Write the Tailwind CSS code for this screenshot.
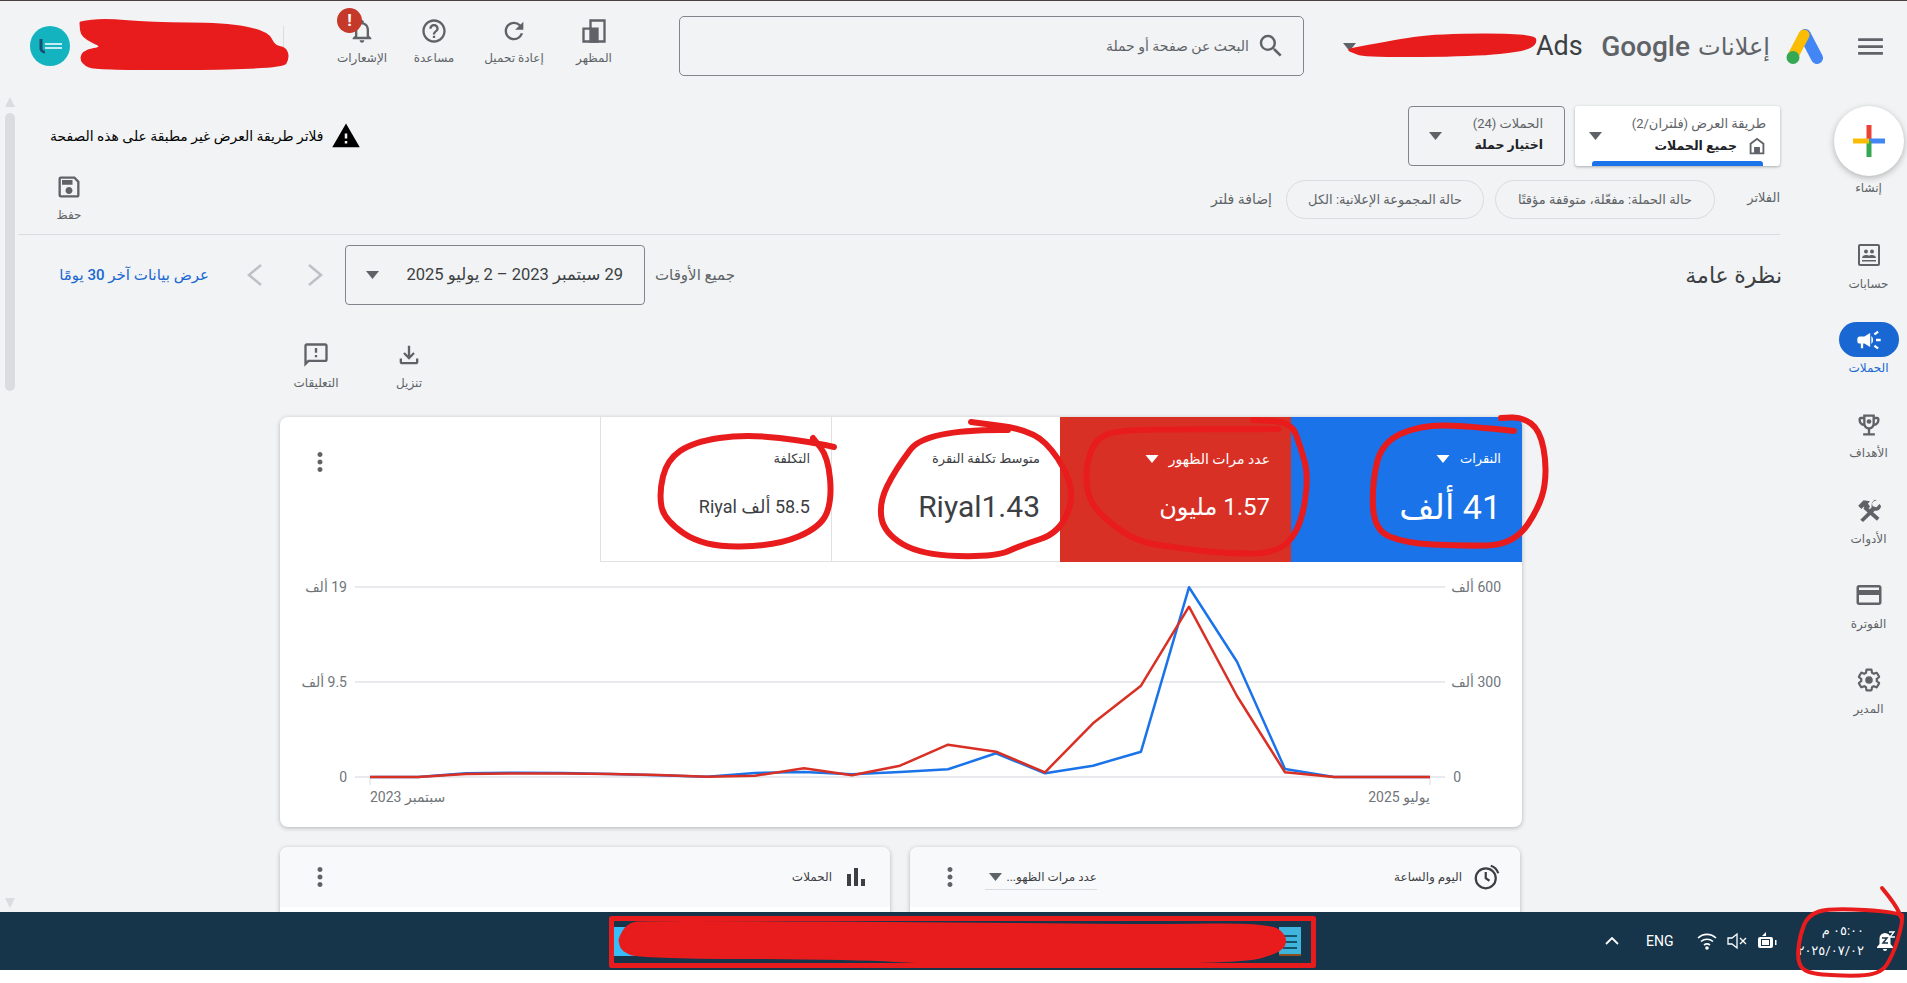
<!DOCTYPE html>
<html lang="ar" dir="rtl" class="font-[Roboto,'Liberation_Sans','DejaVu_Sans',sans-serif]">
<head>
<meta charset="UTF-8">
<title>Google Ads</title>
<script src="https://cdn.jsdelivr.net/npm/@tailwindcss/browser@4"></script>
</head>
<body class="relative w-[1907px] h-[983px] overflow-hidden bg-white text-[#5f6368]">

<div class="h-[983px] flex flex-col">
  <div class="h-px bg-[#4a4040]"></div>
  <div class="h-[911px] bg-[#f1f3f4] flex flex-col">

    <!-- header -->
    <header class="flex h-[91px] shrink-0">
      <svg class="w-[33px] h-[33px] mr-[20px] self-center" viewBox="0 0 24 24" fill="#5f6368"><path d="M3 18h18v-2H3v2zm0-5h18v-2H3v2zm0-7v2h18V6H3z"/></svg>
      <svg class="w-[37px] h-[36px] mr-[31px] self-center" viewBox="0 0 37 36">
        <path d="M19 6 L31 29" stroke="#4285f4" stroke-width="12" stroke-linecap="round" fill="none"/>
        <path d="M18 6 L7 27" stroke="#fbbc04" stroke-width="11" stroke-linecap="round" fill="none"/>
        <circle cx="7" cy="28.500" r="6.500" fill="#34a853"/>
      </svg>
      <span class="w-[70px] mr-[16px] self-center text-[24px] whitespace-nowrap">إعلانات</span>
      <span dir="ltr" class="w-[92px] mr-[10px] self-center text-[28px] font-medium text-right whitespace-nowrap">Google</span>
      <span dir="ltr" class="w-[47px] mr-[15px] self-center text-[27px] text-[#3c4043] whitespace-nowrap">Ads</span>
      <svg class="w-[13px] h-[8px] mr-[180px] self-center" viewBox="0 0 13 8" fill="#5f6368"><path d="M0 0h13L6.500 8z"/></svg>
      <div class="w-[625px] h-[60px] mr-[39px] mt-[15px] border border-[#80868b] rounded-[5px] flex items-center">
        <svg class="w-[30px] h-[30px] mr-[17px]" viewBox="0 0 24 24" fill="#5f6368"><path d="M15.500 14h-.79l-.28-.27A6.471 6.471 0 0 0 16 9.500 6.500 6.500 0 1 0 9.500 16c1.610 0 3.090-.59 4.230-1.570l.27.28v.79l5 4.990L20.490 19l-4.990-5zm-6 0C7.010 14 5 11.990 5 9.500S7.010 5 9.500 5 14 7.010 14 9.500 11.990 14 9.500 14z"/></svg>
        <span class="mr-[7px] text-[14px] whitespace-nowrap">البحث عن صفحة أو حملة</span>
      </div>

      <button class="w-[80px] mr-[45px] mt-[16px] flex flex-col items-center self-start">
        <svg class="w-[28px] h-[28px]" viewBox="0 0 24 24" fill="none" stroke="#5f6368" stroke-width="2"><path d="M3 21V10h6V3h12v18z"/><path d="M9 10h6v11H9z" fill="#5f6368"/></svg>
        <span class="mt-[5px] text-[12px] leading-4 whitespace-nowrap">المظهر</span>
      </button>
      <button class="w-[80px] mt-[16px] flex flex-col items-center self-start">
        <svg class="w-[28px] h-[28px]" viewBox="0 0 24 24" fill="#5f6368"><path d="M17.650 6.350A7.958 7.958 0 0 0 12 4c-4.420 0-7.990 3.580-7.990 8s3.570 8 7.990 8c3.730 0 6.840-2.550 7.730-6h-2.080A5.990 5.990 0 0 1 12 18c-3.310 0-6-2.690-6-6s2.690-6 6-6c1.660 0 3.140.69 4.220 1.780L13 11h7V4l-2.350 2.350z"/></svg>
        <span class="mt-[5px] text-[12px] leading-4 whitespace-nowrap">إعادة تحميل</span>
      </button>
      <button class="w-[80px] mt-[16px] flex flex-col items-center self-start">
        <svg class="w-[28px] h-[28px]" viewBox="0 0 24 24" fill="#5f6368"><path d="M11 18h2v-2h-2v2zm1-16C6.480 2 2 6.480 2 12s4.480 10 10 10 10-4.480 10-10S17.520 2 12 2zm0 18c-4.410 0-8-3.590-8-8s3.590-8 8-8 8 3.590 8 8-3.590 8-8 8zm0-14c-2.210 0-4 1.790-4 4h2c0-1.100.9-2 2-2s2 .9 2 2c0 2-3 1.750-3 5h2c0-2.250 3-2.500 3-5 0-2.210-1.790-4-4-4z"/></svg>
        <span class="mt-[5px] text-[12px] leading-4 whitespace-nowrap">مساعدة</span>
      </button>
      <button class="relative w-[64px] mt-[16px] flex flex-col items-center self-start">
        <svg class="w-[28px] h-[28px]" viewBox="0 0 24 24" fill="#5f6368"><path d="M12 22c1.100 0 2-.9 2-2h-4c0 1.100.9 2 2 2zm6-6v-5c0-3.070-1.630-5.640-4.500-6.320V4c0-.83-.67-1.500-1.500-1.500s-1.500.67-1.500 1.500v.68C7.640 5.360 6 7.920 6 11v5l-2 2v1h16v-1l-2-2zm-2 1H8v-6c0-2.480 1.510-4.500 4-4.500s4 2.020 4 4.500v6z"/></svg>
        <span class="mt-[5px] text-[12px] leading-4 whitespace-nowrap">الإشعارات</span>
        <span class="absolute right-[32px] top-[-9px] w-[25px] h-[25px] rounded-full bg-[#c5392b] text-white font-bold text-[17px] leading-[25px] text-center">!</span>
      </button>
      <div class="w-px h-[22px] mt-[25px] mr-[46px] bg-[#dadce0]"></div>
      <div class="w-[40px] h-[40px] mr-auto ml-[30px] mt-[25px] rounded-full bg-[#14b3c0] flex items-center justify-center">
        <svg class="w-[28px] h-[16px]" viewBox="0 0 28 16"><path d="M5 1v10a4 4 0 0 0 4 3" stroke="#1b4f72" stroke-width="3" fill="none"/><path d="M9 6h17M9 10h17" stroke="#fff" stroke-width="1.500"/></svg>
      </div>
    </header>

    <div class="flex h-[820px] overflow-hidden">
      <!-- side nav -->
      <nav class="w-[127px] shrink-0 flex flex-col items-start text-[12px] leading-4">
        <div class="w-[77px] mt-[14px] flex flex-col items-center">
          <div class="w-[70px] h-[70px] rounded-full bg-white shadow-[0_2px_6px_rgba(60,64,67,0.35)] flex items-center justify-center">
            <svg class="w-[32px] h-[32px]" viewBox="0 0 32 32">
              <path d="M13.500 0h5v16h-5z" fill="#ea4335"/>
              <path d="M16 13.500h16v5H16z" fill="#4285f4"/>
              <path d="M13.500 16h5v16h-5z" fill="#34a853"/>
              <path d="M0 13.500h16v5H0z" fill="#fbbc04"/>
            </svg>
          </div>
          <span class="mt-[4px] whitespace-nowrap">إنشاء</span>
        </div>
        <div class="w-[77px] mt-[47px] flex flex-col items-center">
          <svg class="w-[24px] h-[24px]" viewBox="0 0 24 24" fill="#5f6368"><path fill-rule="evenodd" d="M3 1h18a2 2 0 0 1 2 2v18a2 2 0 0 1-2 2H3a2 2 0 0 1-2-2V3a2 2 0 0 1 2-2zm0 2v18h18V3z"/><circle cx="9" cy="8.500" r="2"/><circle cx="15" cy="8.500" r="2"/><path d="M5 15c0-2 2-3 4-3s3 .6 3 1c0-.4 1-1 3-1s4 1 4 3zM5 17h14v1.500H5z"/></svg>
          <span class="mt-[9px] whitespace-nowrap">حسابات</span>
        </div>
        <div class="w-[77px] mt-[30px] flex flex-col items-center">
          <div class="w-[60px] h-[35px] rounded-full bg-[#1967d2] flex items-center justify-center">
            <svg class="w-[28px] h-[28px]" viewBox="0 0 24 24" fill="#fff"><path d="M18 11v2h4v-2h-4zm-2 6.610c.96.71 2.210 1.650 3.200 2.390.4-.53.8-1.070 1.200-1.600-.99-.74-2.240-1.680-3.200-2.400-.4.54-.8 1.080-1.200 1.610zM20.400 5.600c-.4-.53-.8-1.070-1.200-1.600-.99.74-2.240 1.680-3.200 2.400.4.53.8 1.070 1.200 1.600.96-.72 2.210-1.650 3.200-2.400zM4 9c-1.100 0-2 .9-2 2v2c0 1.100.9 2 2 2h1v4h2v-4h1l5 3V6L8 9H4zm11.500 3c0-1.330-.58-2.530-1.500-3.350v6.690c.92-.81 1.500-2.010 1.500-3.340z"/></svg>
          </div>
          <span class="mt-[3px] text-[#1967d2] whitespace-nowrap">الحملات</span>
        </div>
        <div class="w-[77px] mt-[37px] flex flex-col items-center">
          <svg class="w-[28px] h-[28px] -my-[2px]" viewBox="0 0 24 24" fill="#5f6368"><path fill-rule="evenodd" d="M19 5h-2V3H7v2H5c-1.100 0-2 .9-2 2v1c0 2.550 1.920 4.630 4.390 4.940.63 1.500 1.980 2.630 3.610 2.960V19H7v2h10v-2h-4v-3.100c1.630-.33 2.980-1.460 3.610-2.960C19.080 12.630 21 10.550 21 8V7c0-1.100-.9-2-2-2zM5 8V7h2v3.820C5.840 10.400 5 9.300 5 8zm14 0c0 1.300-.84 2.400-2 2.820V7h2v1zM9 5h6v6c0 1.650-1.350 3-3 3s-3-1.350-3-3z"/><circle cx="12" cy="9" r="2"/></svg>
          <span class="mt-[8px] whitespace-nowrap">الأهداف</span>
        </div>
        <div class="w-[77px] mt-[37px] flex flex-col items-center">
          <svg class="w-[26px] h-[26px] -my-[1px]" viewBox="0 0 24 24" fill="#5f6368"><path d="M2 8l5-5 6 1-2 2 2 3-3 3-3-3-2 2z"/><path d="M8.500 10.500 21 21.500" stroke="#5f6368" stroke-width="3.500" fill="none" transform="translate(-.5 -1)"/><path d="M4 21l9-9 2.500 2.500L6.500 23z"/><path d="M17 2.500l-2.500 3 1 3 3.500 1 2.500-3 1.500 1.500c.4 2.500-2.500 5.500-5.500 4.500l-4 4-3-3 4-4c-.8-3 1.500-6.500 5-6.500z"/></svg>
          <span class="mt-[9px] whitespace-nowrap">الأدوات</span>
        </div>
        <div class="w-[77px] mt-[36px] flex flex-col items-center">
          <svg class="w-[30px] h-[30px] -my-[3px]" viewBox="0 0 24 24" fill="#5f6368"><path d="M20 4H4c-1.110 0-2 .89-2 2v12c0 1.110.89 2 2 2h16c1.110 0 2-.89 2-2V6c0-1.110-.89-2-2-2zm0 14H4v-6h16v6zm0-10H4V6h16v2z"/></svg>
          <span class="mt-[9px] whitespace-nowrap">الفوترة</span>
        </div>
        <div class="w-[77px] mt-[36px] flex flex-col items-center">
          <svg class="w-[26px] h-[26px] -my-[1px]" viewBox="0 0 24 24" fill="none"><path stroke="#5f6368" stroke-width="2" d="M19.140 12.940c.04-.3.06-.61.06-.94 0-.32-.02-.64-.07-.94l2.030-1.580a.49.49 0 0 0 .12-.61l-1.920-3.320a.488.488 0 0 0-.59-.22l-2.390.96c-.5-.38-1.030-.7-1.620-.94l-.36-2.540a.484.484 0 0 0-.48-.41h-3.840c-.24 0-.43.17-.47.41l-.36 2.540c-.59.24-1.130.57-1.620.94l-2.390-.96c-.22-.08-.47 0-.59.22L2.740 8.870c-.12.21-.08.47.12.61l2.030 1.580c-.05.3-.09.63-.09.94s.02.64.07.94l-2.030 1.580a.49.49 0 0 0-.12.61l1.920 3.320c.12.22.37.29.59.22l2.390-.96c.5.38 1.030.7 1.620.94l.36 2.540c.05.24.24.41.48.41h3.840c.24 0 .44-.17.47-.41l.36-2.540c.59-.24 1.130-.56 1.620-.94l2.390.96c.22.08.47 0 .59-.22l1.920-3.320c.12-.22.07-.47-.12-.61l-2.010-1.580z"/><circle cx="12" cy="12" r="3.500" fill="#5f6368"/></svg>
          <span class="mt-[9px] whitespace-nowrap">المدير</span>
        </div>
      </nav>

      <main class="w-[1762px] shrink-0 flex flex-col">
        <!-- view + campaign pickers -->
        <div class="flex h-[60px] mt-[14px] shrink-0">
          <div class="relative w-[205px] h-[60px] bg-white rounded-[3px] shadow-[0_1px_3px_rgba(60,64,67,0.4)] overflow-hidden">
            <div class="mr-[14px] mt-[10px] text-[13px] leading-4 whitespace-nowrap">طريقة العرض (فلتران/2)</div>
            <div class="mr-[14px] mt-[3px] flex items-center text-[12.500px] leading-5 font-bold text-[#202124]">
              <svg class="w-[22px] h-[22px] -mr-[2px]" viewBox="0 0 24 24" fill="#5f6368"><path d="M12 3L4 9v12h16V9l-8-6zm6 16h-3v-6H9v6H6v-9l6-4.500 6 4.500v9z"/><path d="M9 13h6v6H9z"/></svg>
              <span class="mr-[9px] whitespace-nowrap">جميع الحملات</span>
            </div>
            <svg class="absolute left-[14px] top-[26px] w-[13px] h-[8px]" viewBox="0 0 13 8" fill="#5f6368"><path d="M0 0h13L6.500 8z"/></svg>
            <div class="absolute right-[17px] left-[17px] bottom-0 h-[5px] bg-[#1a73e8] rounded-t-[3px]"></div>
          </div>
          <div class="relative w-[157px] h-[60px] mr-[10px] border border-[#80868b] rounded-[4px]">
            <div class="mr-[21px] mt-[9px] text-[13px] leading-4 whitespace-nowrap">الحملات (24)</div>
            <div class="mr-[21px] mt-[3px] text-[12.500px] leading-5 font-bold text-[#202124] whitespace-nowrap">اختيار حملة</div>
            <svg class="absolute left-[20px] top-[25px] w-[13px] h-[8px]" viewBox="0 0 13 8" fill="#5f6368"><path d="M0 0h13L6.500 8z"/></svg>
          </div>
          <div class="mr-auto ml-[32px] flex items-center text-black text-[13.900px]">
            <svg class="w-[30px] h-[30px]" viewBox="0 0 24 24" fill="#000"><path d="M1 21h22L12 2 1 21zm12-3h-2v-2h2v2zm0-4h-2v-4h2v4z"/></svg>
            <span class="mr-[8px] whitespace-nowrap">فلاتر طريقة العرض غير مطبقة على هذه الصفحة</span>
          </div>
        </div>

        <!-- filters -->
        <div class="flex h-[60px] mt-[9px] shrink-0 border-b border-[#dadce0] text-[13px]">
          <span class="mt-[13px] w-[35px] whitespace-nowrap">الفلاتر</span>
          <span class="w-[220px] h-[39px] mr-[30px] mt-[5px] rounded-full border border-[#dadce0] flex items-center justify-center whitespace-nowrap">حالة الحملة: مفعّلة، متوقفة مؤقتًا</span>
          <span class="w-[198px] h-[39px] mr-[11px] mt-[5px] rounded-full border border-[#dadce0] flex items-center justify-center whitespace-nowrap">حالة المجموعة الإعلانية: الكل</span>
          <span class="mr-[14px] mt-[14px] text-[14px] whitespace-nowrap">إضافة فلتر</span>
          <button class="w-[48px] mr-auto ml-[27px] flex flex-col items-center">
            <svg class="w-[28px] h-[28px] -mt-[2px]" viewBox="0 0 24 24" fill="#5f6368"><path d="M17 3H5a2 2 0 0 0-2 2v14a2 2 0 0 0 2 2h14c1.100 0 2-.9 2-2V7l-4-4zm2 16H5V5h11.170L19 7.830V19zm-7-7c-1.660 0-3 1.340-3 3s1.340 3 3 3 3-1.340 3-3-1.340-3-3-3zM6 6h9v4H6z"/></svg>
            <span class="mt-[6px] text-[12px] leading-4">حفظ</span>
          </button>
        </div>

        <!-- overview -->
        <div class="flex items-center h-[60px] mt-[10px] shrink-0">
          <h1 class="-mr-[2px] text-[22px] text-[#3c4043] whitespace-nowrap">نظرة عامة</h1>
          <div class="mr-auto ml-[37px] flex items-center">
            <span class="text-[15px] whitespace-nowrap">جميع الأوقات</span>
            <div class="w-[300px] h-[60px] mr-[10px] border border-[#80868b] rounded-[4px] flex items-center justify-between text-[#3c4043] text-[16.500px]">
              <span class="mr-[21px] whitespace-nowrap">29 سبتمبر 2023 – 2 يوليو 2025</span>
              <svg class="w-[13px] h-[8px] ml-[20px]" viewBox="0 0 13 8" fill="#5f6368"><path d="M0 0h13L6.500 8z"/></svg>
            </div>
            <svg class="w-[40px] h-[40px] mr-[10px]" viewBox="0 0 40 40" fill="none" stroke="#bdc1c6" stroke-width="2.500"><path d="M14 10l12 10-12 10"/></svg>
            <svg class="w-[40px] h-[40px] mr-[20px]" viewBox="0 0 40 40" fill="none" stroke="#bdc1c6" stroke-width="2.500"><path d="M26 10L14 20l12 10"/></svg>
            <a class="w-[154px] mr-[26px] text-[15px] font-medium text-[#1967d2] whitespace-nowrap">عرض بيانات آخر 30 يومًا</a>
          </div>
        </div>

        <div class="w-[1242px] mr-[258px] shrink-0">
          <div class="flex justify-end gap-[29px] pl-[4px] mt-[38px]">
            <button class="w-[64px] flex flex-col items-center">
              <svg class="w-[28px] h-[28px] -mt-[2px]" viewBox="0 0 24 24" fill="#5f6368"><path d="M18 15v3H6v-3H4v3c0 1.100.9 2 2 2h12c1.100 0 2-.9 2-2v-3h-2zm-1-4l-1.410-1.410L13 12.170V4h-2v8.170L8.410 9.590 7 11l5 5 5-5z"/></svg>
              <span class="mt-[6px] text-[12px] leading-4">تنزيل</span>
            </button>
            <button class="w-[64px] flex flex-col items-center">
              <svg class="w-[28px] h-[28px] -mt-[2px]" viewBox="0 0 24 24" fill="#5f6368"><path d="M20 2H4c-1.100 0-2 .9-2 2v18l4-4h14c1.100 0 2-.9 2-2V4c0-1.100-.9-2-2-2zm0 14H5.170L4 17.170V4h16v12zM11 12h2v2h-2zm0-6h2v4h-2z"/></svg>
              <span class="mt-[6px] text-[12px] leading-4">التعليقات</span>
            </button>
          </div>

          <!-- performance card -->
          <section class="mt-[26px] h-[410px] bg-white rounded-[8px] shadow-[0_1px_4px_rgba(60,64,67,0.35)] overflow-hidden">
            <div class="flex h-[145px]">
              <div class="w-[231px] bg-[#1a73e8] text-white pr-[21px] pt-[34px]">
                <div class="flex items-center gap-[10px] text-[13px] leading-4 font-medium">النقرات <svg class="w-[14px] h-[8px]" viewBox="0 0 13 8" fill="#fff"><path d="M0 0h13L6.500 8z"/></svg></div>
                <div class="mt-[17px] text-[34px] leading-[46px] whitespace-nowrap">41 ألف</div>
              </div>
              <div class="w-[231px] bg-[#d93025] text-white pr-[21px] pt-[34px]">
                <div class="flex items-center gap-[10px] text-[14px] leading-4 font-medium whitespace-nowrap">عدد مرات الظهور <svg class="w-[14px] h-[8px]" viewBox="0 0 13 8" fill="#fff"><path d="M0 0h13L6.500 8z"/></svg></div>
                <div class="mt-[17px] text-[24px] leading-[46px] whitespace-nowrap">1.57 مليون</div>
              </div>
              <div class="w-[229px] border-b border-l border-[#e0e0e0] text-[#3c4043] pr-[20px] pt-[34px]">
                <div class="text-[13px] leading-4 font-medium whitespace-nowrap">متوسط تكلفة النقرة</div>
                <div class="mt-[17px] text-[30px] leading-[46px] whitespace-nowrap">Riyal1.43</div>
              </div>
              <div class="w-[231px] border-b border-l border-[#e0e0e0] text-[#3c4043] pr-[21px] pt-[34px]">
                <div class="text-[13px] leading-4 font-medium whitespace-nowrap">التكلفة</div>
                <div class="mt-[17px] text-[18px] leading-[46px] whitespace-nowrap">58.5 ألف Riyal</div>
              </div>
              <svg class="w-[30px] h-[30px] mr-auto ml-[25px] mt-[30px]" viewBox="0 0 24 24" fill="#5f6368"><path d="M12 8c1.100 0 2-.9 2-2s-.9-2-2-2-2 .9-2 2 .9 2 2 2zm0 2c-1.100 0-2 .9-2 2s.9 2 2 2 2-.9 2-2-.9-2-2-2zm0 6c-1.100 0-2 .9-2 2s.9 2 2 2 2-.9 2-2-.9-2-2-2z"/></svg>
            </div>
            <svg class="block" width="1242" height="265" viewBox="280 562 1242 265" font-size="14" fill="#70757a">
              <g stroke="#e8eaed" stroke-width="2" fill="none">
                <path d="M355 587H1445M355 682H1445M355 777H1445"/>
              </g>
              <path d="M370 777v8M1430 777v8" stroke="#dadce0"/>
              <text x="347" y="592">19 ألف</text>
              <text x="347" y="687">9.5 ألف</text>
              <text x="347" y="782">0</text>
              <text x="1501" y="592">600 ألف</text>
              <text x="1501" y="687">300 ألف</text>
              <text x="1461" y="782">0</text>
              <text x="370" y="802" text-anchor="end">سبتمبر 2023</text>
              <text x="1430" y="802">يوليو 2025</text>
              <polyline fill="none" stroke="#1a73e8" stroke-width="2.500" stroke-linejoin="round" points="370,777 418,777 466,773.300 515,772.700 563,773 611,774 659,775.300 707,776.700 755,773 804,772 852,774.300 900,772 948,769.300 996,753.300 1045,773.300 1093,765.700 1141,751.700 1189,587.300 1237,661.700 1285,769 1334,777 1382,777 1430,777"/>
              <polyline fill="none" stroke="#d93025" stroke-width="2.500" stroke-linejoin="round" points="370,777 418,777 466,774 515,773.500 563,773.500 611,774 659,775 707,776.700 755,775.700 804,768.300 852,775.300 900,765.700 948,744.700 996,751.700 1045,772.300 1093,723.300 1141,685.700 1189,606.700 1237,696 1285,772.300 1334,777 1382,777 1430,777"/>
            </svg>
          </section>

          <!-- lower cards -->
          <div class="grid grid-cols-2 gap-[20px] w-[1240px] mt-[20px] mr-[2px]">
            <section class="h-[100px] bg-white rounded-t-[8px] shadow-[0_1px_4px_rgba(60,64,67,0.35)] overflow-hidden">
              <div class="h-[60px] bg-[#f8f9fa] flex items-center text-[12px] text-[#3c4043]">
                <svg class="w-[30px] h-[30px] mr-[18px]" viewBox="0 0 24 24" fill="none" stroke="#3c4043" stroke-width="1.800"><circle cx="11" cy="13" r="8"/><path d="M11 8v5l3 2"/><path d="M15 3a9 9 0 0 1 6 6" /></svg>
                <span class="mr-[10px] whitespace-nowrap">اليوم والساعة</span>
                <div class="mr-auto flex items-center justify-between w-[112px] h-[26px] border-b border-[#dadce0] whitespace-nowrap">
                  <span>عدد مرات الظهو...</span>
                  <svg class="w-[13px] h-[8px] ml-[4px]" viewBox="0 0 13 8" fill="#5f6368"><path d="M0 0h13L6.500 8z"/></svg>
                </div>
                <svg class="w-[30px] h-[30px] mr-[20px] ml-[25px]" viewBox="0 0 24 24" fill="#5f6368"><path d="M12 8c1.100 0 2-.9 2-2s-.9-2-2-2-2 .9-2 2 .9 2 2 2zm0 2c-1.100 0-2 .9-2 2s.9 2 2 2 2-.9 2-2-.9-2-2-2zm0 6c-1.100 0-2 .9-2 2s.9 2 2 2 2-.9 2-2-.9-2-2-2z"/></svg>
              </div>
            </section>
            <section class="h-[100px] bg-white rounded-t-[8px] shadow-[0_1px_4px_rgba(60,64,67,0.35)] overflow-hidden">
              <div class="h-[60px] bg-[#f8f9fa] flex items-center text-[12px] text-[#3c4043]">
                <svg class="w-[24px] h-[24px] mr-[22px]" viewBox="0 0 24 24" fill="#3c4043"><path d="M3 9h4v12H3zM10 3h4v18h-4zM17 14h4v7h-4z"/></svg>
                <span class="mr-[12px] whitespace-nowrap">الحملات</span>
                <svg class="w-[30px] h-[30px] mr-auto ml-[25px]" viewBox="0 0 24 24" fill="#5f6368"><path d="M12 8c1.100 0 2-.9 2-2s-.9-2-2-2-2 .9-2 2 .9 2 2 2zm0 2c-1.100 0-2 .9-2 2s.9 2 2 2 2-.9 2-2-.9-2-2-2zm0 6c-1.100 0-2 .9-2 2s.9 2 2 2 2-.9 2-2-.9-2-2-2z"/></svg>
              </div>
            </section>
          </div>
        </div>
      </main>

      <!-- page scrollbar -->
      <div class="w-[18px] shrink-0 flex flex-col items-center pt-[5px] pl-[5px] pr-[3px]">
        <div class="w-0 h-0 border-x-[5px] border-x-transparent border-b-[10px] border-b-[#dadce0]"></div>
        <div class="w-[10px] h-[278px] mt-[6px] rounded-full bg-[#dadce0]"></div>
        <div class="w-0 h-0 mt-[507px] border-x-[5px] border-x-transparent border-t-[10px] border-t-[#dadce0]"></div>
      </div>
    </div>
  </div>

  <!-- windows taskbar -->
  <div class="h-[58px] bg-[#16344a] text-white flex items-center shrink-0">
    <svg class="w-[20px] h-[22px] mr-[11px]" viewBox="0 0 20 22" fill="#fff"><path d="M9 3a5.500 5.500 0 0 0-5.500 5.500V14L1 17v1h16v-1l-2.500-3V8.500A5.500 5.500 0 0 0 9 3zM7 19a2 2 0 0 0 4 0z"/><path d="M6 8h5l-4 5h5" fill="none" stroke="#16344a" stroke-width="1.500"/><path d="M13 2h5l-4 5h5" fill="none" stroke="#fff" stroke-width="1.300"/></svg>
    <div class="w-[63px] mr-[12px] text-[13px] leading-5">
      <div class="whitespace-nowrap">٠٥:٠٠ م</div>
      <div class="whitespace-nowrap">٢٠٢٥/٠٧/٠٢</div>
    </div>
    <svg class="w-[20px] h-[20px] mr-[24px]" viewBox="0 0 20 20" fill="#fff"><path fill-rule="evenodd" d="M3 6h11a2 2 0 0 1 2 2v7a2 2 0 0 1-2 2H3a2 2 0 0 1-2-2V8a2 2 0 0 1 2-2zm1 2v7h9V8z"/><path d="M18 9h1.500v5H18z"/><path d="M5 5L9 1v4z"/><path d="M5 9h7v5H5z"/></svg>
    <svg class="w-[20px] h-[20px] mr-[10px]" viewBox="0 0 20 20" fill="none" stroke="#fff" stroke-width="1.300"><path d="M1 7v6h4l5 4V3L5 7zM13 7l6 6M19 7l-6 6"/></svg>
    <svg class="w-[20px] h-[20px] mr-[10px]" viewBox="0 0 20 20" fill="none" stroke="#fff" stroke-width="1.600"><path d="M1 7a13 13 0 0 1 18 0M4 10.500a9 9 0 0 1 12 0M7 14a5 5 0 0 1 6 0"/><circle cx="10" cy="17" r="1" fill="#fff"/></svg>
    <span dir="ltr" class="mr-[22px] w-[29px] text-[14px]">ENG</span>
    <svg class="w-[14px] h-[8px] mr-[27px]" viewBox="0 0 14 8" fill="none" stroke="#fff" stroke-width="1.800"><path d="M1 7l6-6 6 6"/></svg>
    <div class="relative w-[22px] h-[29px] mr-[304px] bg-[#3fb4dc]">
      <div class="absolute inset-x-[4px] top-[8px] h-[2px] bg-[#16546e]"></div>
      <div class="absolute inset-x-[4px] top-[14px] h-[2px] bg-[#16546e]"></div>
      <div class="absolute inset-x-[4px] top-[20px] h-[2px] bg-[#16546e]"></div>
      <div class="absolute inset-x-0 bottom-0 h-[2px] bg-[#8a4f1c]"></div>
    </div>
    <div class="w-[24px] h-[29px] mr-[642px] bg-[#37bdf8]"></div>
  </div>
  <div class="h-[13px] bg-white"></div>
</div>

<!-- red marker the screenshot was annotated with -->
<svg class="absolute left-0 top-0 pointer-events-none" width="1907" height="983" fill="none" stroke="#e81c1c" stroke-width="6" stroke-linecap="round" stroke-linejoin="round">
  <path class="mark" data-pts="1514,431 1470,426 1421,425 1382,442 1372,483 1374,530 1405,543 1460,546 1514,545 1542,503 1547,467 1540,430 1522,417 1501,418"/>
  <path class="mark" data-pts="1278,429 1200,429 1116,430 1095,440 1086,465 1087,495 1100,515 1136,542 1180,548 1219,553 1276,554 1300,530 1309,477 1300,445 1291,422 1253,420"/>
  <path class="mark" data-pts="1008,430 926,429 895,470 879,503 884,533 921,555 995,557 1022,545 1059,533 1075,495 1059,457 1032,430 971,422"/>
  <path class="mark" data-pts="834,447 813,442 746,434 693,442 667,460 659,493 664,520 704,547 776,546 821,527 832,500 828,457 813,438"/>
  <path class="mark" stroke-width="4" data-pts="1882,888 1896,905 1902,920 1899,912 1830,908 1808,915 1800,935 1797,960 1805,973 1840,976 1880,975 1893,955 1902,925 1902,915"/>
  <path class="mark" fill="#e81c1c" stroke-width="3" data-pts="81,23 97,19 152,24 224,24 267,32 274,47 285,48 288,58 282,68 97,69 82,63 82,52 106,47 82,37 81,23"/>
  <path class="mark" fill="#e81c1c" stroke-width="3" data-pts="1350,50 1390,42 1438,35 1533,35 1536,43 1524,50 1475,55 1365,56 1350,50"/>
  <rect x="611.500" y="918.500" width="702" height="47" stroke-width="5" stroke-linecap="butt"/>
  <path class="mark" fill="#e81c1c" stroke-width="3" data-pts="620,940 625,924 650,922 1000,924 1150,926 1270,924 1287,938 1280,952 1240,962 1000,963 940,963 850,958 640,957 622,950 620,940"/>
</svg>
<script>
  // smooth the hand-drawn marks: quadratic through the midpoints
  document.querySelectorAll('.mark').forEach(el => {
    const p = el.dataset.pts.split(' ').map(s => s.split(',').map(Number));
    let d = `M${p[0][0]} ${p[0][1]}`;
    for (let i = 1; i < p.length - 1; i++) {
      const mx = (p[i][0] + p[i + 1][0]) / 2, my = (p[i][1] + p[i + 1][1]) / 2;
      d += ` Q${p[i][0]} ${p[i][1]} ${mx} ${my}`;
    }
    const last = p[p.length - 1];
    el.setAttribute('d', d + ` L${last[0]} ${last[1]}`);
  });
</script>
</body>
</html>
